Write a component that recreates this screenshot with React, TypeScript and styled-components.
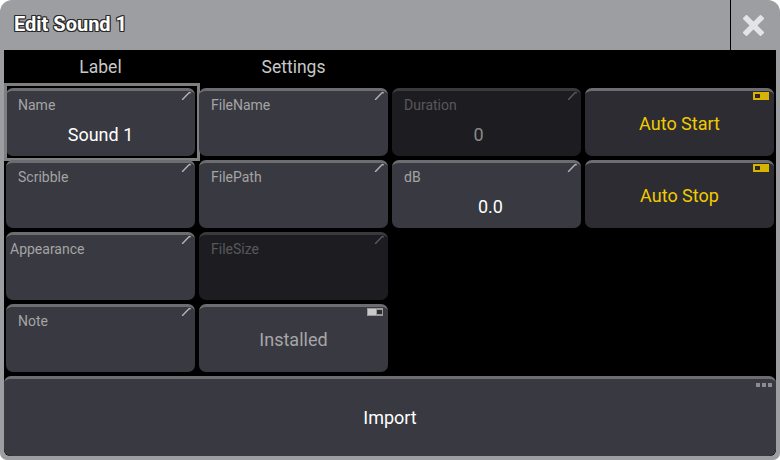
import React from 'react'
import styled, { createGlobalStyle, css } from 'styled-components'

const GlobalStyle = createGlobalStyle`
  html, body {
    margin: 0;
    padding: 0;
    background: #ffffff;
  }
  body {
    font-family: Roboto, "Liberation Sans", sans-serif;
  }
`

type Kind = 'normal' | 'disabled' | 'auto'

const Window = styled.div`
  width: 780px;
  height: 460px;
  box-sizing: border-box;
  background: #9d9ea2;
  border-radius: 12px 12px 7px 7px;
  display: flex;
  flex-direction: column;
  overflow: hidden;
`

const TitleBar = styled.div`
  height: 50px;
  display: flex;
  align-items: stretch;
`

const Title = styled.div`
  flex: 1;
  display: flex;
  align-items: center;
  padding-left: 14px;
  padding-bottom: 2px;
  font-size: 20px;
  font-weight: 700;
  color: #ffffff;
  text-shadow:
    -1px -1px 0 #2a2a2a, 1px -1px 0 #2a2a2a, -1px 1px 0 #2a2a2a, 1px 1px 0 #2a2a2a,
    0 -1px 0 #2a2a2a, 0 1px 0 #2a2a2a, -1px 0 0 #2a2a2a, 1px 0 0 #2a2a2a;
`

const CloseButton = styled.div`
  width: 50px;
  flex-shrink: 0;
  border-left: 1px solid #000000;
  display: flex;
  align-items: center;
  justify-content: center;
  padding-right: 4px;
  box-sizing: border-box;
`

const Content = styled.div`
  flex: 1;
  margin: 0 4px 4px;
  background: #000000;
  border-radius: 0 0 6px 6px;
  display: flex;
  flex-direction: column;
`

const TabRow = styled.div`
  height: 34px;
  padding: 0 2px;
  display: grid;
  grid-template-columns: repeat(4, 189px);
  column-gap: 4px;
`

const Tab = styled.div`
  display: flex;
  align-items: center;
  justify-content: center;
  color: #c8c8c8;
  font-size: 17.5px;
`

const Grid = styled.div`
  padding: 4px 2px 0;
  display: grid;
  grid-template-columns: repeat(4, 189px);
  grid-template-rows: repeat(4, 68px);
  gap: 4px;
`

const kindColors = {
  normal: { bg: '#393941', strip: '#6d6d71', label: '#a4a4a6' },
  disabled: { bg: '#1d1d21', strip: '#3a3a3e', label: '#58585c' },
  auto: { bg: '#2c2c32', strip: '#6d6d71', label: '#a4a4a6' },
}

const Cell = styled.div<{ $kind: Kind; $selected?: boolean }>`
  position: relative;
  box-sizing: border-box;
  border-radius: 7px;
  background: ${p => kindColors[p.$kind].bg};
  border-top: 3px solid ${p => kindColors[p.$kind].strip};
  display: flex;
  flex-direction: column;
  ${p =>
    p.$selected &&
    css`
      &::after {
        content: '';
        position: absolute;
        top: -8px;
        left: -2px;
        right: -5px;
        bottom: -5px;
        border: 3px solid #7f7f7f;
        pointer-events: none;
      }
    `}
`

const CellLabel = styled.div<{ $kind: Kind; $tight?: boolean }>`
  padding: 6px 0 0 ${p => (p.$tight ? '4px' : '12px')};
  font-size: 14px;
  line-height: 17px;
  color: ${p => kindColors[p.$kind].label};
`

const CellValue = styled.div<{ $dim?: boolean; $shift: number }>`
  flex: 1;
  display: flex;
  align-items: center;
  justify-content: center;
  padding-bottom: 2px;
  margin-left: ${p => p.$shift * 2}px;
  font-size: 18px;
  color: ${p => (p.$dim ? '#8a8a8c' : '#ffffff')};
`

const ButtonText = styled.div<{ $color: string }>`
  flex: 1;
  display: flex;
  align-items: center;
  justify-content: center;
  font-size: 18px;
  color: ${p => p.$color};
`

const Corner = styled.div`
  position: absolute;
  top: 0;
  right: 4px;
  line-height: 0;
`

const ImportButton = styled.button`
  position: relative;
  margin-top: 4px;
  height: 80px;
  box-sizing: border-box;
  border: none;
  border-top: 3px solid #6d6d71;
  border-radius: 7px;
  background: #393941;
  color: #ffffff;
  font-family: inherit;
  font-size: 18px;
  padding: 0;
`

const Pencil = ({ dim }: { dim?: boolean }) => (
  <svg width="10" height="9" viewBox="0 0 10 9">
    <path
      d="M1.5 8.5 L7.5 2.2 Q8.6 1.2 9.2 1.8"
      stroke={dim ? '#5a5a5e' : '#b4b4b6'}
      strokeWidth="1.4"
      fill="none"
      strokeLinecap="round"
    />
  </svg>
)

const Toggle = ({ on }: { on: boolean }) =>
  on ? (
    <svg width="16" height="8" viewBox="0 0 16 8">
      <rect x="0" y="0" width="16" height="8" fill="#d8b400" />
      <rect x="2" y="2" width="5" height="4" fill="#2a2a20" />
    </svg>
  ) : (
    <svg width="16" height="8" viewBox="0 0 16 8">
      <rect x="0" y="0" width="16" height="8" fill="#9a9a9c" />
      <rect x="1" y="1" width="8" height="6" fill="#c8c8ca" />
      <rect x="10" y="2" width="5" height="4" fill="#2c2c32" />
    </svg>
  )

const Dots = () => (
  <svg width="16" height="4" viewBox="0 0 16 4">
    <rect x="0" y="0" width="4" height="4" fill="#8c8c90" />
    <rect x="6" y="0" width="4" height="4" fill="#8c8c90" />
    <rect x="12" y="0" width="4" height="4" fill="#8c8c90" />
  </svg>
)

const CloseIcon = () => (
  <svg width="21" height="21" viewBox="0 0 21 21">
    <path d="M3.5 3.5 L17.5 17.5 M17.5 3.5 L3.5 17.5" stroke="#e4e4e6" strokeWidth="5.5" strokeLinecap="square" />
  </svg>
)

type Field = {
  label?: string
  value?: string
  kind: Kind
  tight?: boolean
  selected?: boolean
  shift?: number
}

const InputCell = ({ label, value, kind, tight, selected, shift = 0 }: Field) => (
  <Cell $kind={kind} $selected={selected}>
    <Corner>
      <Pencil dim={kind === 'disabled'} />
    </Corner>
    <CellLabel $kind={kind} $tight={tight}>{label}</CellLabel>
    <CellValue $dim={kind === 'disabled'} $shift={shift}>{value}</CellValue>
  </Cell>
)

const ToggleCell = ({ text, on, kind, color }: { text: string; on: boolean; kind: Kind; color: string }) => (
  <Cell $kind={kind}>
    <Corner style={{ top: 1, right: 5 }}>
      <Toggle on={on} />
    </Corner>
    <ButtonText $color={color}>{text}</ButtonText>
  </Cell>
)

const Empty = styled.div``

export default function App() {
  return (
    <>
      <GlobalStyle />
      <Window>
        <TitleBar>
          <Title>Edit Sound 1</Title>
          <CloseButton>
            <CloseIcon />
          </CloseButton>
        </TitleBar>
        <Content>
          <TabRow>
            <Tab>Label</Tab>
            <Tab>Settings</Tab>
          </TabRow>
          <Grid>
            <InputCell label="Name" value="Sound 1" kind="normal" selected />
            <InputCell label="FileName" kind="normal" />
            <InputCell label="Duration" value="0" kind="disabled" shift={-8} />
            <ToggleCell text="Auto Start" on kind="auto" color="#f2ca00" />

            <InputCell label="Scribble" kind="normal" />
            <InputCell label="FilePath" kind="normal" />
            <InputCell label="dB" value="0.0" kind="normal" shift={4} />
            <ToggleCell text="Auto Stop" on kind="auto" color="#f2ca00" />

            <InputCell label="Appearance" kind="normal" tight />
            <InputCell label="FileSize" kind="disabled" />
            <Empty />
            <Empty />

            <InputCell label="Note" kind="normal" />
            <ToggleCell text="Installed" on={false} kind="normal" color="#a6a6a8" />
            <Empty />
            <Empty />
          </Grid>
          <ImportButton>
            <Corner style={{ top: 2, right: 4 }}>
              <Dots />
            </Corner>
            Import
          </ImportButton>
        </Content>
      </Window>
    </>
  )
}
